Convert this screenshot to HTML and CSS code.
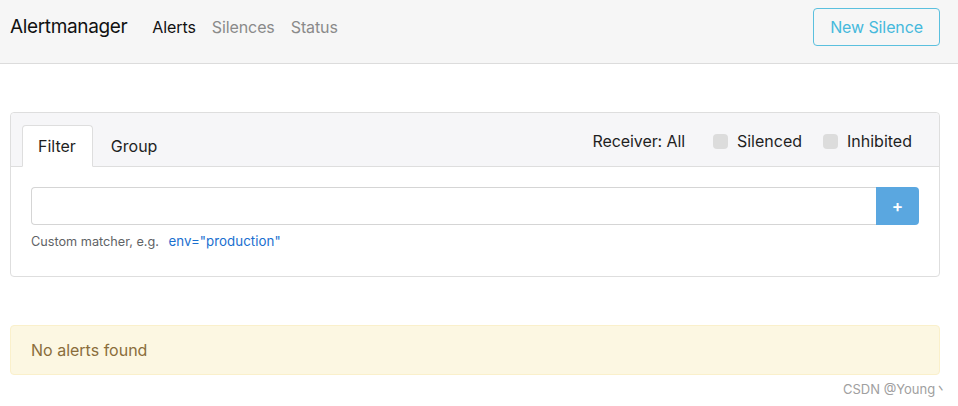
FILE: index.html
```html
<!DOCTYPE html>
<html lang="en">
<head>
<meta charset="utf-8">
<title>Alertmanager</title>
<link rel="stylesheet" href="styles.css">
</head>
<body>
<nav class="navbar">
  <a class="brand" href="#">Alertmanager</a>
  <ul class="nav-links">
    <li><a class="nav-link active" href="#">Alerts</a></li>
    <li><a class="nav-link" href="#">Silences</a></li>
    <li><a class="nav-link" href="#">Status</a></li>
  </ul>
  <a class="btn-outline" href="#">New Silence</a>
</nav>

<main class="container">
  <section class="card">
    <div class="card-header">
      <ul class="tabs">
        <li><a class="tab active" href="#">Filter</a></li>
        <li><a class="tab" href="#">Group</a></li>
      </ul>
      <div class="filters">
        <span class="receiver">Receiver: All</span>
        <label class="check"><span class="box"></span>Silenced</label>
        <label class="check"><span class="box"></span>Inhibited</label>
      </div>
    </div>
    <div class="card-body">
      <div class="input-group">
        <input class="form-control" type="text">
        <button class="btn-add" type="button">+</button>
      </div>
      <p class="help">Custom matcher, e.g. <a class="example" href="#">env="production"</a></p>
    </div>
  </section>

  <div class="alert">No alerts found</div>
</main>
<div class="watermark">CSDN @Young丶</div>
</body>
</html>
```

FILE: styles.css
```css
* { box-sizing: border-box; }
html, body { margin: 0; padding: 0; }
body {
  font-family: Inter, "Liberation Sans", Arial, sans-serif;
  font-size: 16px;
  line-height: 24px;
  color: #292b2c;
  background: #fff;
  overflow: hidden;
}
a { text-decoration: none; }
ul { list-style: none; margin: 0; padding: 0; }

.navbar {
  display: flex;
  align-items: center;
  height: 64px;
  padding: 8px 18px 17px 10px;
  background: #f6f6f6;
  border-bottom: 1px solid #dcdcdc;
}
.brand {
  font-size: 19px;
  color: #111;
  letter-spacing: -0.35px;
  margin-right: 17px;
}
.nav-links { display: flex; flex: 1; }
.nav-link {
  display: block;
  padding: 0 8px;
  color: #8a8a8a;
  font-size: 16px;
  letter-spacing: -0.1px;
}
.nav-link.active { color: #111; }
.btn-outline {
  display: block;
  height: 38px;
  line-height: 36px;
  padding: 0 16px;
  border: 1px solid #5bc0de;
  border-radius: 4px;
  color: #45b9dc;
  font-size: 16px;
  letter-spacing: -0.1px;
}

.container {
  width: 930px;
  margin: 48px 0 0 10px;
}
.card {
  border: 1px solid #dedede;
  border-radius: 4px;
}
.card-header {
  display: flex;
  justify-content: space-between;
  padding: 12px 27px 0 11px;
  background: #f6f6f8;
  border-bottom: 1px solid #dedede;
  border-radius: 4px 4px 0 0;
}
.tabs { display: flex; margin-bottom: -1px; }
.tab {
  display: block;
  padding: 8px 16px 8px 15px;
  color: #1f1f1f;
  border: 1px solid transparent;
  border-radius: 4px 4px 0 0;
  margin-right: 2px;
}
.tab.active {
  background: #fff;
  border-color: #dedede #dedede #fff;
}
.filters {
  display: flex;
  align-items: center;
  margin-top: 4px;
  height: 24px;
  color: #1f1f1f;
}
.receiver { margin-right: 28px; letter-spacing: -0.1px; }
.check {
  display: flex;
  align-items: center;
}
.check + .check { margin-left: 21px; }
.box {
  width: 15px;
  height: 15px;
  background: #dcdcdc;
  border-radius: 4px;
  margin-right: 9px;
}

.card-body { padding: 20px; }
.input-group { display: flex; }
.form-control {
  flex: 1;
  height: 38px;
  border: 1px solid #d5d5d5;
  border-right: 0;
  border-radius: 4px 0 0 4px;
  font: inherit;
  padding: 0 12px;
}
.btn-add {
  width: 43px;
  height: 38px;
  border: 0;
  background: #5aa7e0;
  color: #fff;
  font: 600 17px/38px Inter, "Liberation Sans", sans-serif;
  border-radius: 0 4px 4px 0;
  padding: 0;
}
.help {
  margin: 7px 0 5px;
  font-size: 12.7px;
  line-height: 19px;
  color: #5f6366;
}
.example {
  color: #1a6fcf;
  margin-left: 6px;
  font-size: 13.3px;
  letter-spacing: 0.05px;
}

.alert {
  margin-top: 48px;
  padding: 12px 20px 12px;
  background: #fcf7e2;
  border: 1px solid #faf0cb;
  border-radius: 4px;
  color: #8a6d3b;
  font-size: 16px;
}
.watermark {
  margin-top: 5px;
  padding-left: 843px;
  font-size: 13px;
  line-height: 18px;
  color: #a0a0a0;
  white-space: nowrap;
}
```
